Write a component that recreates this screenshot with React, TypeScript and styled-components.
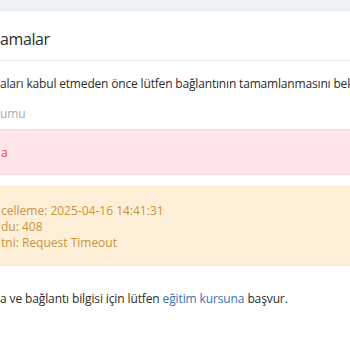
import React from 'react';
import styled, { createGlobalStyle } from 'styled-components';

const GlobalStyle = createGlobalStyle`
  html, body {
    margin: 0;
    padding: 0;
    background: #eef1f5;
    font-family: 'Open Sans', 'Noto Sans', sans-serif;
    overflow: hidden;
  }
`;

const statusLines = [
  'celleme: 2025-04-16 14:41:31',
  'du: 408',
  'tni: Request Timeout',
];

const App = () => {
  return (
    <>
      <GlobalStyle />
      <Page>
        <Card>
          <CardHeader>amalar</CardHeader>
          <CardBody>
            <Text>aları kabul etmeden önce lütfen bağlantının tamamlanmasını bek</Text>
            <Muted>umu</Muted>
            <Alert $tone="danger">a</Alert>
            <Alert $tone="warning">
              {statusLines.map((line) => (
                <div key={line}>{line}</div>
              ))}
            </Alert>
            <Footnote>
              a ve bağlantı bilgisi için lütfen <Link href="#">eğitim kursuna</Link> başvur.
            </Footnote>
          </CardBody>
        </Card>
      </Page>
    </>
  );
};

const Page = styled.div`
  width: 350px;
  height: 350px;
  padding-top: 10px;
  box-sizing: border-box;
  overflow: hidden;
`;

const Card = styled.section`
  margin: 0 -20px;
  padding: 0 20px;
  height: 400px;
  background: #ffffff;
  border-top: 1px solid #e4e7eb;
`;

const CardHeader = styled.h5`
  margin: 0;
  box-sizing: border-box;
  height: 50px;
  padding-top: 6px;
  display: flex;
  align-items: center;
  font-size: 16px;
  font-weight: 400;
  letter-spacing: -0.4px;
  color: #2e2e2e;
  border-bottom: 1px solid #eceef1;
`;

const CardBody = styled.div`
  padding-top: 15px;
  font-size: 12px;
  line-height: 16px;
  letter-spacing: -0.12px;
  color: #2b2b2b;
`;

const Text = styled.p`
  margin: 0;
  white-space: nowrap;
  letter-spacing: -0.17px;
`;

const Muted = styled.div`
  margin-top: 14px;
  color: #aaa;
`;

const Alert = styled.div<{ $tone: 'danger' | 'warning' }>`
  margin: ${(p) => (p.$tone === 'danger' ? '7px' : '11px')} -20px 0;
  padding: ${(p) => (p.$tone === 'danger' ? '15px 20px 13px' : '16px 20px 14px')};
  background: ${(p) => (p.$tone === 'danger' ? '#fee6e8' : '#fef0d8')};
  border: 1px solid ${(p) => (p.$tone === 'danger' ? '#fbdadd' : '#fde8c6')};
  color: ${(p) => (p.$tone === 'danger' ? '#d24b55' : '#c8943a')};
  letter-spacing: ${(p) => (p.$tone === 'warning' ? '0' : 'inherit')};
`;

const Footnote = styled.p`
  margin: 25px 0 0;
  white-space: nowrap;
`;

const Link = styled.a`
  color: #3a70b5;
  text-decoration: none;
`;

export default App;
